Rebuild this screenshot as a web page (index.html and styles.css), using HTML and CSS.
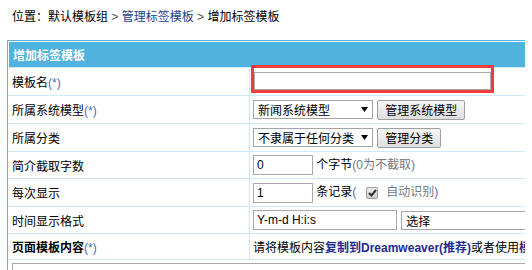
FILE: index.html
```html
<!DOCTYPE html>
<html lang="zh-CN">
<head>
    <meta charset="UTF-8">
    <title>增加标签模板</title>
    <link rel="stylesheet" href="styles.css">
</head>
<body>
    <div class="crumb">
        位置：默认模板组 <span class="sep">&gt;</span> <a href="#">管理标签模板</a> <span class="sep">&gt;</span> 增加标签模板
    </div>

    <table class="tb">
        <tr>
            <th colspan="2">增加标签模板</th>
        </tr>
        <tr>
            <td class="label">模板名<span class="req">(*)</span></td>
            <td class="field">
                <span class="mark"><input type="text" class="txt wide" value=""></span>
            </td>
        </tr>
        <tr>
            <td class="label">所属系统模型<span class="req">(*)</span></td>
            <td class="field">
                <span class="sel w120"><span class="sel-text">新闻系统模型</span><svg class="arrow" width="7" height="5" viewBox="0 0 7 5"><path d="M0 0H7L3.5 5Z" fill="#000"/></svg></span>
                <button class="btn">管理系统模型</button>
            </td>
        </tr>
        <tr>
            <td class="label">所属分类</td>
            <td class="field">
                <span class="sel w120"><span class="sel-text">不隶属于任何分类</span><svg class="arrow" width="7" height="5" viewBox="0 0 7 5"><path d="M0 0H7L3.5 5Z" fill="#000"/></svg></span>
                <button class="btn">管理分类</button>
            </td>
        </tr>
        <tr class="tight">
            <td class="label">简介截取字数</td>
            <td class="field">
                <input type="text" class="txt short" value="0">
                个字节<span class="gray">(0为不截取)</span>
            </td>
        </tr>
        <tr>
            <td class="label">每次显示</td>
            <td class="field">
                <input type="text" class="txt short" value="1">
                条记录<span class="req">(</span><span class="chk"><svg width="9" height="8" viewBox="0 0 9 8"><path d="M1 4L3.5 6.5L8 1" fill="none" stroke="#333" stroke-width="2"/></svg></span><span class="gray">自动识别</span><span class="req">)</span>
            </td>
        </tr>
        <tr class="tight">
            <td class="label">时间显示格式</td>
            <td class="field">
                <input type="text" class="txt date" value="Y-m-d H:i:s">
                <span class="sel w134"><span class="sel-text">选择</span><svg class="arrow" width="7" height="5" viewBox="0 0 7 5"><path d="M0 0H7L3.5 5Z" fill="#000"/></svg></span>
            </td>
        </tr>
        <tr class="tighter">
            <td class="label"><b>页面模板内容</b><span class="req">(*)</span></td>
            <td class="field">
                请将模板内容<a href="#" class="strong">复制到Dreamweaver(推荐)</a>或者使用<a href="#" class="strong visited">模板编辑器</a>
            </td>
        </tr>
        <tr>
            <td colspan="2" class="area-cell"><textarea class="area"></textarea></td>
        </tr>
    </table>
</body>
</html>
```
FILE: styles.css
```css
html, body {
    overflow: hidden;
}

body {
    margin: 0 7px;
    font-family: "Liberation Sans", "Noto Sans CJK SC", sans-serif;
    font-size: 12px;
    color: #000;
    background-color: #fff;
}

a {
    text-decoration: none;
}

.crumb {
    padding: 7px 5px;
    line-height: 20px;
    white-space: nowrap;
}

.crumb a {
    color: #1b3d8f;
}

.crumb .sep {
    color: #555;
}

.tb {
    margin-top: 6px;
    width: 580px;
    border: 1px solid #5ab4dc;
    border-collapse: separate;
    border-spacing: 0;
}

.tb th {
    height: 25px;
    padding: 0 4px;
    text-align: left;
    color: #fff;
    font-weight: bold;
    background-color: #4fb3dd;
    border: 1px solid #fff;
    border-bottom: 0;
    box-shadow: 0 1px 0 #cce9f7;
}

.tb td {
    height: 27px;
    padding: 0;
    border-bottom: 1px solid #cce9f7;
    white-space: nowrap;
    vertical-align: middle;
}

.tb tr.tight td {
    height: 26px;
}

.tb tr.tighter td {
    height: 25px;
}

.tb td.label {
    width: 237px;
    padding-left: 4px;
    border-right: 1px solid #cce9f7;
}

.tb td.field {
    padding-left: 3px;
}

.req {
    color: #3f6fb5;
}

.gray {
    color: #6f7a86;
}

.strong {
    font-weight: bold;
    color: #1f2a8f;
}

.strong.visited {
    color: #4a1a78;
}

/* Champs de saisie */
.txt {
    box-sizing: border-box;
    height: 20px;
    padding: 0 3px;
    margin: 0;
    border: 1px solid #a9a9a9;
    font-family: inherit;
    font-size: 12px;
    vertical-align: middle;
}

.txt.wide {
    width: 237px;
    height: 18px;
    display: block;
}

.txt.short {
    width: 60px;
}

.txt.date {
    width: 144px;
}

/* Encadré rouge autour du nom */
.mark {
    display: inline-block;
    position: relative;
    top: -2px;
    margin-left: -2px;
    padding-top: 4px;
    border: 3px solid #f23c3c;
    vertical-align: middle;
}

.sel {
    box-sizing: border-box;
    display: inline-flex;
    align-items: center;
    justify-content: space-between;
    height: 19px;
    padding: 0 4px 0 4px;
    border: 1px solid #a5a5a5;
    background-color: #fff;
    vertical-align: middle;
}

.sel.w120 {
    width: 120px;
}

.sel.w134 {
    width: 140px;
    margin-left: 1px;
}

.sel .arrow {
    margin-left: 4px;
}

.btn {
    box-sizing: border-box;
    height: 20px;
    padding: 0 7px;
    margin-left: 1px;
    border: 1px solid #9f9f9f;
    border-radius: 2px;
    background: linear-gradient(#f6f6f6, #dedede);
    font-family: inherit;
    font-size: 12px;
    color: #000;
    vertical-align: middle;
}

.chk {
    box-sizing: border-box;
    display: inline-flex;
    align-items: center;
    justify-content: center;
    width: 12px;
    height: 12px;
    margin: 0 8px 0 10px;
    border: 1px solid #9c9c9c;
    border-radius: 2px;
    background: linear-gradient(#ececec, #cfcfcf);
    vertical-align: middle;
}

.area-cell {
    padding: 3px 4px !important;
}

.area {
    display: block;
    width: 540px;
    height: 100px;
    border: 1px solid #aaa;
}
```
